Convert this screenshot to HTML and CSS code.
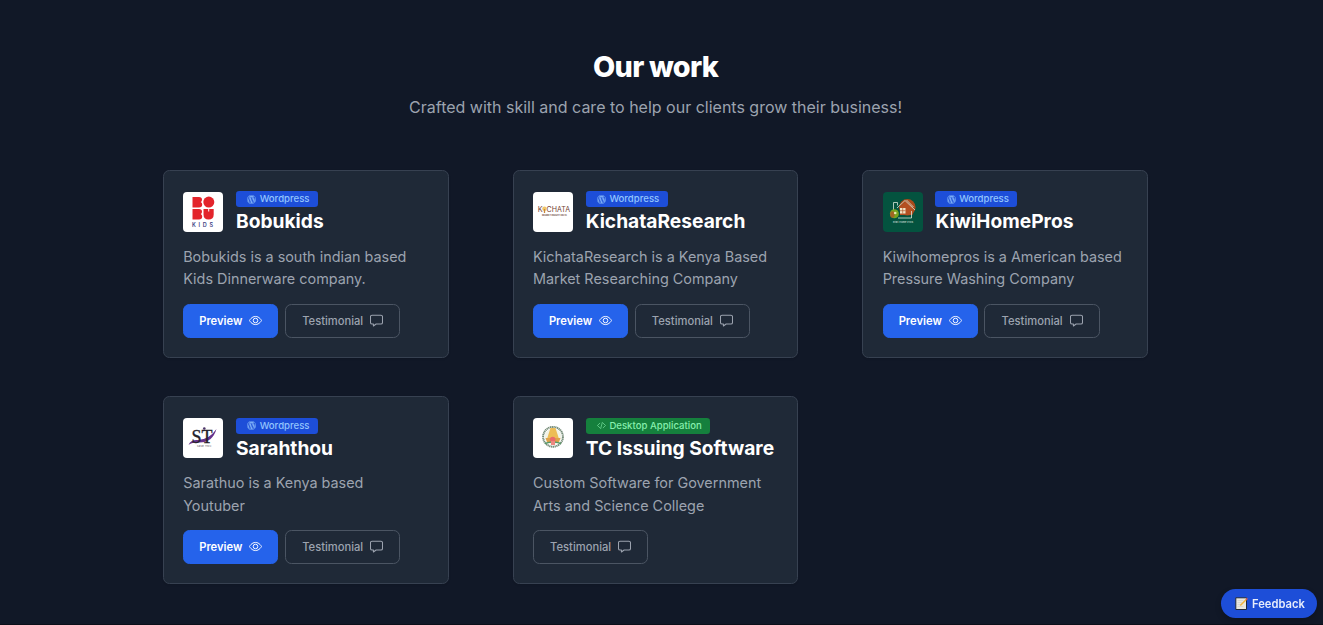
FILE: index.html
```
<!DOCTYPE html>
<html lang="en">
<head>
<meta charset="utf-8">
<title>Our work</title>
<link rel="stylesheet" href="styles.css">
</head>
<body>
<svg width="0" height="0" class="defs">
  <symbol id="wp" viewBox="0 0 16 16"><path d="M12.633 7.653c0-.848-.305-1.435-.566-1.892l-.08-.13c-.317-.51-.594-.958-.594-1.48 0-.63.478-1.218 1.152-1.218q.03 0 .058.003l.031.003A6.84 6.84 0 0 0 8 1.137 6.86 6.86 0 0 0 2.266 4.23c.16.005.313.009.442.009.717 0 1.828-.087 1.828-.087.37-.022.414.521.044.565 0 0-.371.044-.785.065l2.5 7.434 1.5-4.506-1.07-2.929c-.369-.022-.719-.065-.719-.065-.37-.022-.326-.588.043-.566 0 0 1.134.087 1.808.087.718 0 1.83-.087 1.83-.087.37-.022.413.522.043.566 0 0-.372.043-.785.065l2.48 7.377.684-2.287.054-.173c.27-.86.469-1.495.469-2.046zM1.137 8a6.86 6.86 0 0 0 3.868 6.176L1.73 5.206A6.8 6.8 0 0 0 1.137 8m6.983.6-2.059 5.98a6.86 6.86 0 0 0 4.217-.109l-.049-.095zm5.9-3.891q.044.328.045.706c0 .696-.13 1.479-.522 2.458l-2.096 6.06a6.86 6.86 0 0 0 2.572-9.224z"/><path d="M0 8c0-4.411 3.589-8 8-8s8 3.589 8 8-3.59 8-8 8-8-3.589-8-8m.367 0c0 4.209 3.424 7.633 7.633 7.633S15.632 12.209 15.632 8C15.632 3.79 12.208.367 8 .367S.367 3.79.367 8"/></symbol>
  <symbol id="code" viewBox="0 0 16 16"><path fill="none" stroke="currentColor" stroke-width="1.400" stroke-linecap="round" d="M5 4 .8 8 5 12M11 4l4.200 4L11 12M9.500 2.500l-3 11"/></symbol>
  <symbol id="eye" viewBox="0 0 16 16"><path fill="none" stroke="currentColor" stroke-width="1.200" d="M.6 8S3.200 3 8 3s7.400 5 7.400 5-2.600 5-7.400 5S.6 8 .6 8z"/><circle cx="8" cy="8" r="2.800" fill="none" stroke="currentColor" stroke-width="1.200"/></symbol>
  <symbol id="chat" viewBox="0 0 16 16"><path fill="none" stroke="currentColor" stroke-width="1.300" stroke-linejoin="round" d="M2.500 1.500h11a1.900 1.900 0 0 1 1.900 1.900v7a1.900 1.900 0 0 1-1.900 1.900H7.500l-3.300 2.500v-2.500H2.500a1.900 1.900 0 0 1-1.900-1.900v-7a1.900 1.900 0 0 1 1.900-1.900z"/></symbol>
</svg>
<main>
  <header>
    <h1>Our work</h1>
    <p class="lead">Crafted with skill and care to help our clients grow their business!</p>
  </header>
  <div class="grid">
    <article class="card">
      <div class="head">
        <svg class="logo" viewBox="0 0 40 40"><rect width="40" height="40" fill="#fff"/><g fill="#e3242b"><path d="M9.500 5h6.500q3 0 3 2.700 0 1.700-1.300 2.300 1.500.7 1.500 2.500 0 2.900-3.200 2.900h-6.500z"/><circle cx="25.800" cy="10.100" r="5.500"/><path d="M9.500 17h6.500q3 0 3 2.700 0 1.700-1.300 2.300 1.500.7 1.500 2.500 0 3-3.200 3h-6.500zM20.500 17h10.200v5.600q0 5-5.100 5t-5.100-5z"/></g><path d="M25.200 17h1v2.500h-1z" fill="#fff"/><text x="9" y="34.500" font-size="5.500" font-weight="600" textLength="21" fill="#3e4384">KIDS</text></svg>
        <div class="id"><span class="badge"><svg><use href="#wp"/></svg>Wordpress</span><h2>Bobukids</h2></div>
      </div>
      <p class="desc">Bobukids is a south indian based Kids Dinnerware company.</p>
      <div class="actions"><a class="btn primary">Preview<svg><use href="#eye"/></svg></a><a class="btn">Testimonial<svg><use href="#chat"/></svg></a></div>
    </article>
    <article class="card">
      <div class="head">
        <svg class="logo" viewBox="0 0 40 40"><rect width="40" height="40" fill="#fff"/><g font-size="7.300" fill="#754434"><text x="4.700" y="20.300">K</text><text x="13.500" y="20.300" textLength="23.500" lengthAdjust="spacingAndGlyphs">CHATA</text></g><circle cx="11.500" cy="16.700" r="2.300" fill="#f0c66b"/><path d="M11.500 17v4" stroke="#ca8738" stroke-width="1.300"/><text x="9" y="23.700" font-size="2.200" font-weight="700" textLength="25" fill="#77564b">MARKET INSIGHT DELTA</text></svg>
        <div class="id"><span class="badge"><svg><use href="#wp"/></svg>Wordpress</span><h2>KichataResearch</h2></div>
      </div>
      <p class="desc">KichataResearch is a Kenya Based Market Researching Company</p>
      <div class="actions"><a class="btn primary">Preview<svg><use href="#eye"/></svg></a><a class="btn">Testimonial<svg><use href="#chat"/></svg></a></div>
    </article>
    <article class="card">
      <div class="head">
        <svg class="logo" viewBox="0 0 40 40"><rect width="40" height="40" fill="#04533f"/><circle cx="24.300" cy="15.300" r="8.300" fill="#a94a1b"/><path d="m17 15 6-5.500 6.500 5.500v8H17z" fill="#b55022"/><path d="M10.500 20v-9.500h4v3M14 16l8-7.500 10 9.500M23.500 8l7 7M15 26h13.500v-7" fill="none" stroke="#d9e4d7" stroke-width=".8"/><path d="M17 16h5.500v5.500H17z" fill="#f3e4c7"/><path d="M19.700 16v5.500M17 18.700h5.500" stroke="#a94a1b" stroke-width=".6"/><circle cx="11.400" cy="21.800" r="4.500" fill="#77a51f"/><ellipse cx="9.400" cy="22.500" rx="2.200" ry="3.200" fill="#a26524"/><circle cx="12.200" cy="21" r="1.300" fill="#e7ecaa"/><text x="10" y="30.800" font-size="2.400" font-weight="600" textLength="20" fill="#c8dbd3">Kiwi Home Pros</text></svg>
        <div class="id"><span class="badge"><svg><use href="#wp"/></svg>Wordpress</span><h2>KiwiHomePros</h2></div>
      </div>
      <p class="desc">Kiwihomepros is a American based Pressure Washing Company</p>
      <div class="actions"><a class="btn primary">Preview<svg><use href="#eye"/></svg></a><a class="btn">Testimonial<svg><use href="#chat"/></svg></a></div>
    </article>
    <article class="card">
      <div class="head">
        <svg class="logo" viewBox="0 0 40 40"><rect width="40" height="40" fill="#fff"/><path d="M5.500 27q2-5 8-5 12 .5 20-11-4 14-18 13.500-7-.5-10 2.500z" fill="#65318a"/><text class="serif" x="8.500" y="24.500" font-size="18" textLength="21" stroke="#242129" stroke-width=".3" fill="#242129">ST</text><circle cx="21.300" cy="10.500" r="1.300" fill="#4c3569"/><text x="14" y="28.500" font-size="2.300" textLength="14" fill="#55505c">Sarah Thou</text></svg>
        <div class="id"><span class="badge"><svg><use href="#wp"/></svg>Wordpress</span><h2>Sarahthou</h2></div>
      </div>
      <p class="desc">Sarathuo is a Kenya based Youtuber</p>
      <div class="actions"><a class="btn primary">Preview<svg><use href="#eye"/></svg></a><a class="btn">Testimonial<svg><use href="#chat"/></svg></a></div>
    </article>
    <article class="card">
      <div class="head">
        <svg class="logo" viewBox="0 0 40 40"><rect width="40" height="40" fill="#fff"/><circle cx="20" cy="18.800" r="9.900" fill="none" stroke="#758c78" stroke-width="2" stroke-dasharray="1.300 .5"/><circle cx="20" cy="18.800" r="8.300" fill="#f1f3e7"/><path d="M17.500 10h5l3.200 10h-11.400z" fill="#edbd56"/><path d="M12.500 20h15l-1.500 4h-12z" fill="#dfa34c"/><circle cx="19.700" cy="21.500" r="2.800" fill="#e96c6b"/><path d="M12 25.500q8-3 16 0" fill="none" stroke="#579765" stroke-width="1.500"/><path d="M18 23h4v4h-4z" fill="#ed8880"/></svg>
        <div class="id"><span class="badge green"><svg><use href="#code"/></svg>Desktop Application</span><h2>TC Issuing Software</h2></div>
      </div>
      <p class="desc">Custom Software for Government Arts and Science College</p>
      <div class="actions"><a class="btn">Testimonial<svg><use href="#chat"/></svg></a></div>
    </article>
  </div>
</main>
<a class="feedback"><svg viewBox="0 0 13 13"><path d="M.8.800h10.700v11.700H.8z" fill="#e9e7df" stroke="#202838" stroke-width="1"/><path d="M2.500 3.500h6M2.500 5.500h5M2.500 7.500h4M2.500 9.500h6" stroke="#c3c5c9" stroke-width=".5"/><path d="m5.300 8.500 6.200-6.200" stroke="#f2b33d" stroke-width="1.500"/><path d="m11 2.800 1.400-1.400" stroke="#d55d58" stroke-width="1.500"/></svg>Feedback</a>
</body>
</html>
```

FILE: styles.css
```
* { box-sizing: border-box; margin: 0; }
body { background: #111827; font-family: Inter, sans-serif; color: #fff; height: 625px; overflow: hidden; border-bottom: 1px solid #0b0f19; }
.defs { position: absolute; }
main { width: 985.200px; margin-left: 163px; padding-top: 51px; }
header { text-align: center; height: 119px; }
h1 { font-size: 28.800px; font-weight: 800; letter-spacing: -.025em; line-height: 32px; }
.lead { font-size: 16px; line-height: 22.400px; color: #9ca3af; margin-top: 13px; }
.grid { display: grid; grid-template-columns: repeat(3, 1fr); column-gap: 64px; row-gap: 38.400px; }
.card { height: 188px; padding: 20px 19.200px; background: #1f2937; border: 1px solid #374151; border-radius: 6.400px; box-shadow: 0 1px 2px rgba(0, 0, 0, .1); }
.head { display: flex; gap: 12.800px; height: 44px; }
.logo { width: 40px; height: 40px; margin-top: 1px; border-radius: 4px; flex: none; }
.logo .serif { font-family: "Liberation Serif", serif; }
.id { display: flex; flex-direction: column; align-items: flex-start; }
.badge { display: inline-flex; align-items: center; height: 16px; padding: 0 8.300px 1px 11.500px; border-radius: 3.200px; background: #1d4ed8; color: #93c5fd; font-size: 9.600px; font-weight: 500; white-space: nowrap; }
.badge svg { width: 9px; height: 9px; margin: 1px 3.200px 0 0; fill: currentColor; stroke: currentColor; stroke-width: .3px; opacity: .8; }
.green { background: #15803d; color: #86efac; }
h2 { font-size: 19.200px; font-weight: 700; line-height: 25.600px; margin-top: 1.800px; white-space: nowrap; }
.card:nth-child(n+4) .badge { margin-top: .3px; }
.card:nth-child(n+4) h2 { margin-top: 2.300px; }
.desc { margin-top: 11px; font-size: 14.400px; line-height: 22.400px; color: #9ca3af; height: 45px; }
.actions { display: flex; gap: 6.800px; margin-top: 13px; }
.btn { display: inline-flex; align-items: center; height: 34px; padding: 0 16.200px; border: 1px solid #4b5563; border-radius: 6.400px; font-size: 11.200px; font-weight: 500; color: #9ca3af; white-space: nowrap; }
.btn svg { width: 13px; height: 13px; margin-left: 7px; margin-top: -2px; }
.primary { background: #2563eb; border-color: #2563eb; color: #fff; font-weight: 600; padding: 0 15px; }
.primary svg { margin-left: 6.800px; }
.feedback { position: fixed; right: 6px; bottom: 7px; width: 96px; height: 29px; border-radius: 15px; background: #1d4ed8; box-shadow: 0 3px 6px rgba(0, 0, 0, .2); display: flex; align-items: center; padding-left: 14px; gap: 4px; font-size: 11.200px; font-weight: 600; color: #e7edfc; }
.feedback svg { width: 13px; height: 13px; }
```
